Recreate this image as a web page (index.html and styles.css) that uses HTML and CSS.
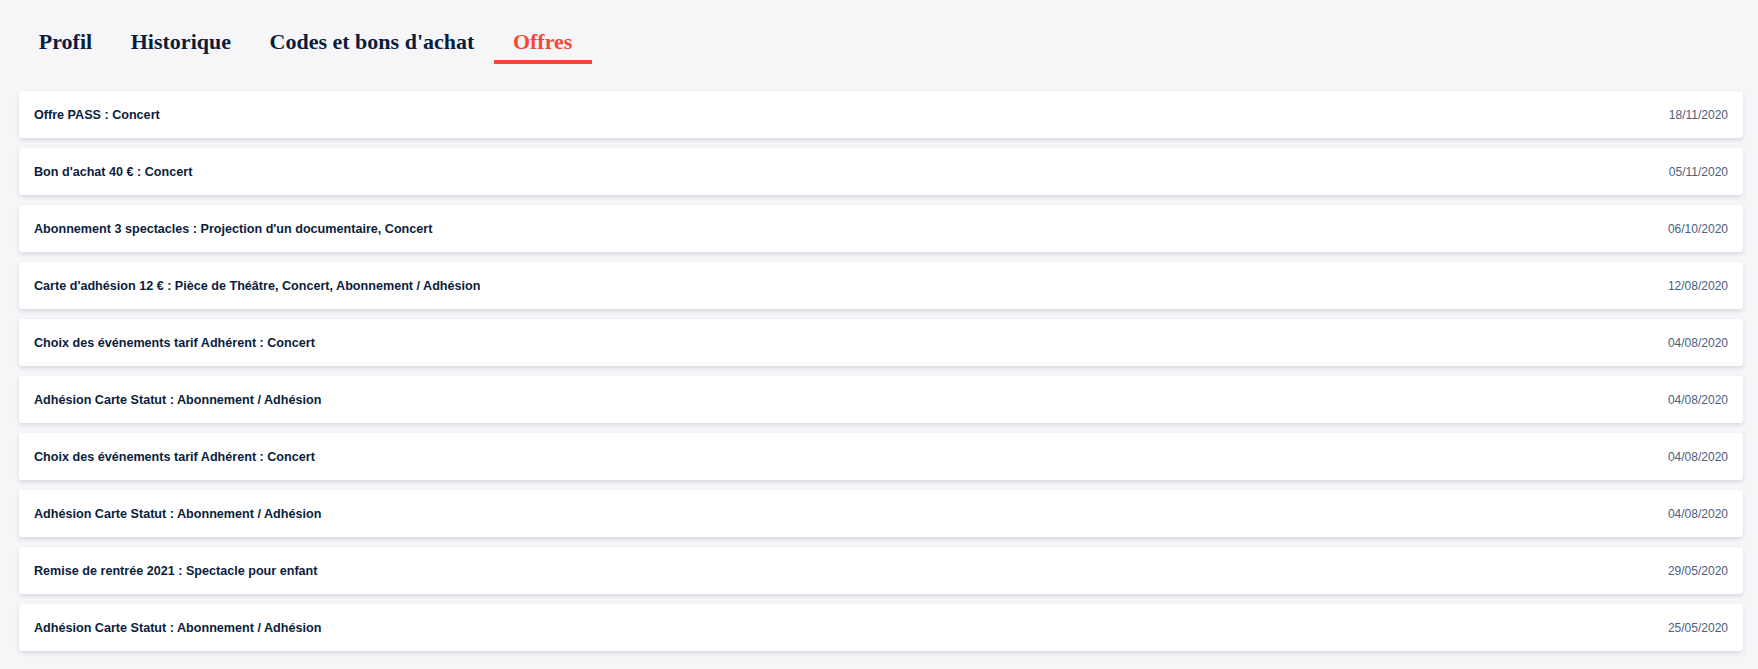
FILE: index.html
```html
<!DOCTYPE html>
<html lang="fr">
<head>
<meta charset="UTF-8">
<meta name="viewport" content="width=device-width, initial-scale=1.0">
<title>Mon compte - Offres</title>
<link rel="stylesheet" href="styles.css">
</head>
<body>

<!-- Tabs -->
<nav class="tabs">
  <a class="tab" href="#">Profil</a>
  <a class="tab" href="#">Historique</a>
  <a class="tab" href="#">Codes et bons d'achat</a>
  <a class="tab active" href="#">Offres</a>
</nav>

<!-- Offer list -->
<ul class="offers">
  <li class="offer"><span class="offer-title">Offre PASS : Concert</span><span class="offer-date">18/11/2020</span></li>
  <li class="offer"><span class="offer-title">Bon d'achat 40 € : Concert</span><span class="offer-date">05/11/2020</span></li>
  <li class="offer"><span class="offer-title">Abonnement 3 spectacles : Projection d'un documentaire, Concert</span><span class="offer-date">06/10/2020</span></li>
  <li class="offer"><span class="offer-title">Carte d'adhésion 12 € : Pièce de Théâtre, Concert, Abonnement / Adhésion</span><span class="offer-date">12/08/2020</span></li>
  <li class="offer"><span class="offer-title">Choix des événements tarif Adhérent : Concert</span><span class="offer-date">04/08/2020</span></li>
  <li class="offer"><span class="offer-title">Adhésion Carte Statut : Abonnement / Adhésion</span><span class="offer-date">04/08/2020</span></li>
  <li class="offer"><span class="offer-title">Choix des événements tarif Adhérent : Concert</span><span class="offer-date">04/08/2020</span></li>
  <li class="offer"><span class="offer-title">Adhésion Carte Statut : Abonnement / Adhésion</span><span class="offer-date">04/08/2020</span></li>
  <li class="offer"><span class="offer-title">Remise de rentrée 2021 : Spectacle pour enfant</span><span class="offer-date">29/05/2020</span></li>
  <li class="offer"><span class="offer-title">Adhésion Carte Statut : Abonnement / Adhésion</span><span class="offer-date">25/05/2020</span></li>
</ul>

</body>
</html>
```

FILE: styles.css
```css
/* Reset */
* {
  margin: 0;
  padding: 0;
  box-sizing: border-box;
}
body, html {
  height: 100%;
  background: #f6f5f8;
  font-family: "Liberation Sans", Arial, sans-serif;
  color: #0b1d3d;
}

/* Tabs */
.tabs {
  display: flex;
  padding: 29px 0 0 19.5px;
}
.tab {
  display: block;
  padding: 0 19.3px 5px;
  border-bottom: 4px solid transparent;
  font-family: "Liberation Serif", "Times New Roman", serif;
  font-weight: bold;
  font-size: 22px;
  line-height: 26px;
  color: #0b1d3d;
  text-decoration: none;
}
.tab.active {
  color: #f4493a;
  border-bottom-color: #f4493a;
}

/* Offers */
.offers {
  list-style: none;
  padding: 27px 15px 0 19px;
}
.offer {
  display: flex;
  justify-content: space-between;
  align-items: center;
  height: 47px;
  margin-bottom: 10px;
  padding: 0 15px;
  background: #fff;
  border-radius: 3px;
  box-shadow: 0 2px 4px rgba(20, 20, 60, 0.13);
}
.offer-title {
  font-size: 12.6px;
  font-weight: bold;
  color: #0b1d3d;
}
.offer-date {
  font-size: 12px;
  color: #4d5d7e;
}
```
